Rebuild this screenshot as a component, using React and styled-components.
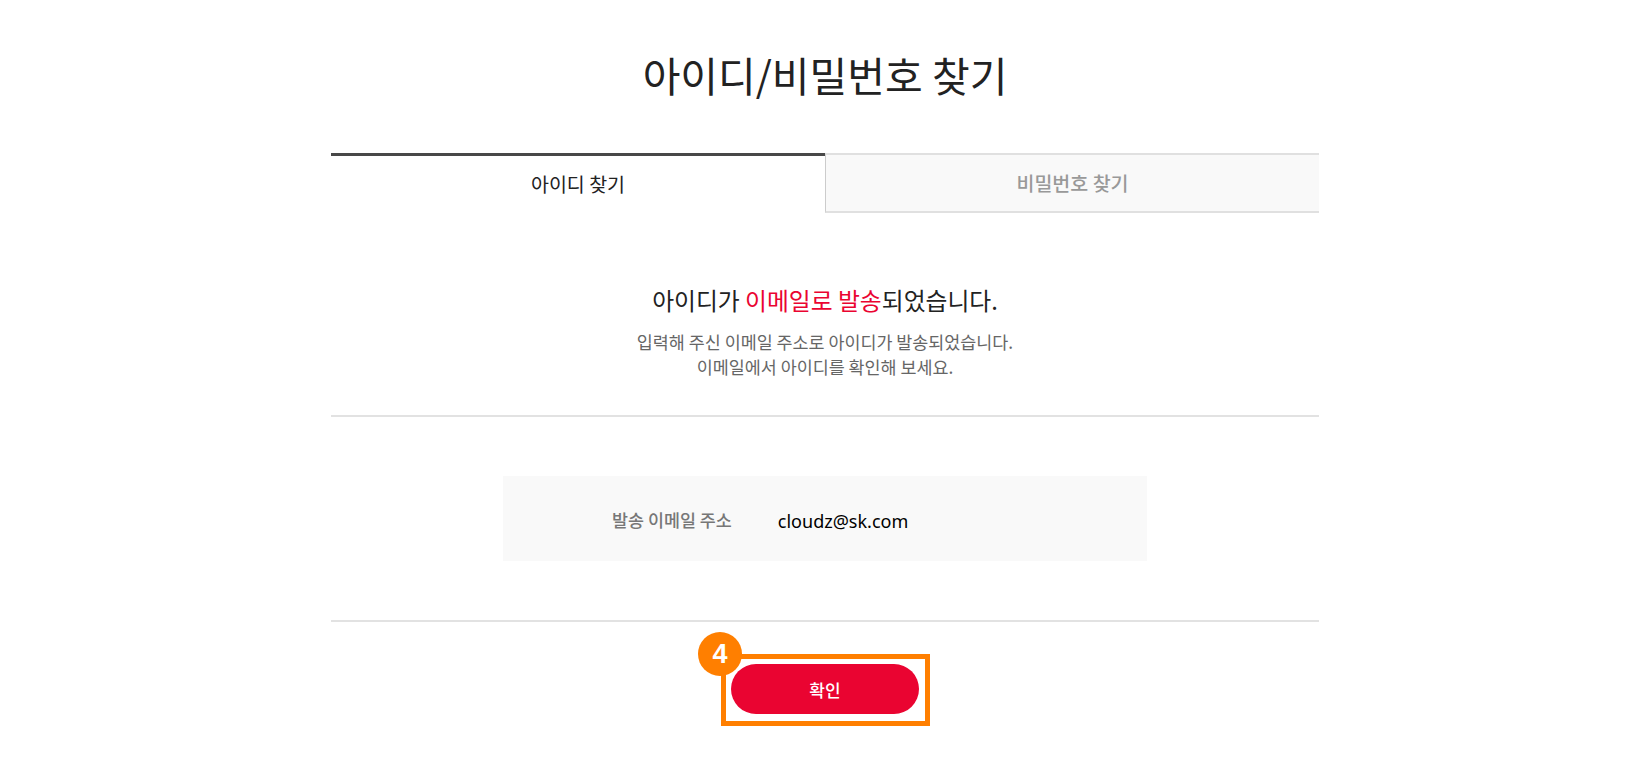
import styled, { createGlobalStyle } from 'styled-components';

const GlobalStyle = createGlobalStyle`
  html, body {
    margin: 0;
    padding: 0;
    background: #fff;
    font-family: "Noto Sans CJK KR", "Noto Sans", sans-serif;
    color: #111;
  }
`;

const Page = styled.main`
  width: 988px;
  margin: 0 auto;
  height: 764px;
  overflow: hidden;
`;

const Title = styled.h1`
  margin: 0;
  height: 153px;
  padding-top: 43px;
  box-sizing: border-box;
  font-size: 41px;
  line-height: 62px;
  font-weight: 400;
  color: #222;
  text-align: center;
`;

const Tabs = styled.div`
  display: grid;
  grid-template-columns: 1fr 1fr;
  height: 60px;
`;

const Tab = styled.div`
  display: flex;
  align-items: center;
  justify-content: center;
  box-sizing: border-box;
  padding-bottom: ${(p) => (p.$active ? '3px' : '1px')};
  font-size: 19.5px;
  font-weight: ${(p) => (p.$active ? 400 : 500)};
  color: ${(p) => (p.$active ? '#222' : '#999')};
  background: ${(p) => (p.$active ? '#fff' : '#f9f9f9')};
  border-top: ${(p) => (p.$active ? '3px solid #484848' : '2px solid #e0e0e0')};
  border-left: ${(p) => (p.$active ? 'none' : '1px solid #ccc')};
  border-bottom: ${(p) => (p.$active ? 'none' : '2px solid #e0e0e0')};
`;

const Message = styled.section`
  height: 204px;
  box-sizing: border-box;
  padding-top: 71px;
  border-bottom: 2px solid #e2e2e2;
  text-align: center;
`;

const Headline = styled.h2`
  margin: 0 0 13px;
  font-size: 23.8px;
  line-height: 32px;
  font-weight: 400;
  color: #222;
`;

const Accent = styled.span`
  color: #ea0431;
`;

const Desc = styled.p`
  margin: 0;
  font-size: 17.4px;
  line-height: 25px;
  color: #666;
`;

const InfoArea = styled.section`
  height: 205px;
  box-sizing: border-box;
  padding-top: 59px;
  border-bottom: 2px solid #e2e2e2;
`;

const InfoBox = styled.div`
  width: 644px;
  height: 85px;
  margin: 0 auto;
  padding: 2px 0 0 109px;
  box-sizing: border-box;
  display: flex;
  align-items: center;
  gap: 46px;
  background: #f9f9f9;
`;

const Label = styled.span`
  font-size: 17.4px;
  font-weight: 500;
  color: #777;
`;

const Email = styled.span`
  margin-top: 2px;
  font-family: "Noto Sans", sans-serif;
  font-size: 18px;
  color: #000;
`;

const Actions = styled.div`
  display: flex;
  justify-content: center;
  padding-top: 42px;
`;

const ConfirmButton = styled.button`
  position: relative;
  width: 188px;
  height: 50px;
  border: none;
  border-radius: 25px;
  background: #ea0431;
  color: #fff;
  font-family: inherit;
  font-size: 17px;
  font-weight: 500;
`;

const Highlight = styled.span`
  position: absolute;
  left: -10px;
  top: -10px;
  width: 209px;
  height: 72px;
  box-sizing: border-box;
  border: 5px solid #ff7f00;
  pointer-events: none;
`;

const StepBadge = styled.span`
  position: absolute;
  left: -33px;
  top: -32px;
  width: 44px;
  height: 44px;
  border-radius: 50%;
  background: #ff7f00;
  color: #fff;
  font-family: "Liberation Sans", sans-serif;
  font-size: 27px;
  font-weight: 700;
  line-height: 44px;
  text-align: center;
`;

export default function App() {
  return (
    <>
      <GlobalStyle />
      <Page>
        <Title>아이디/비밀번호 찾기</Title>
        <Tabs>
          <Tab $active>아이디 찾기</Tab>
          <Tab>비밀번호 찾기</Tab>
        </Tabs>
        <Message>
          <Headline>
            아이디가 <Accent>이메일로 발송</Accent>되었습니다.
          </Headline>
          <Desc>
            입력해 주신 이메일 주소로 아이디가 발송되었습니다.
            <br />
            이메일에서 아이디를 확인해 보세요.
          </Desc>
        </Message>
        <InfoArea>
          <InfoBox>
            <Label>발송 이메일 주소</Label>
            <Email>cloudz@sk.com</Email>
          </InfoBox>
        </InfoArea>
        <Actions>
          <ConfirmButton>
            확인
            <Highlight />
            <StepBadge>4</StepBadge>
          </ConfirmButton>
        </Actions>
      </Page>
    </>
  );
}
